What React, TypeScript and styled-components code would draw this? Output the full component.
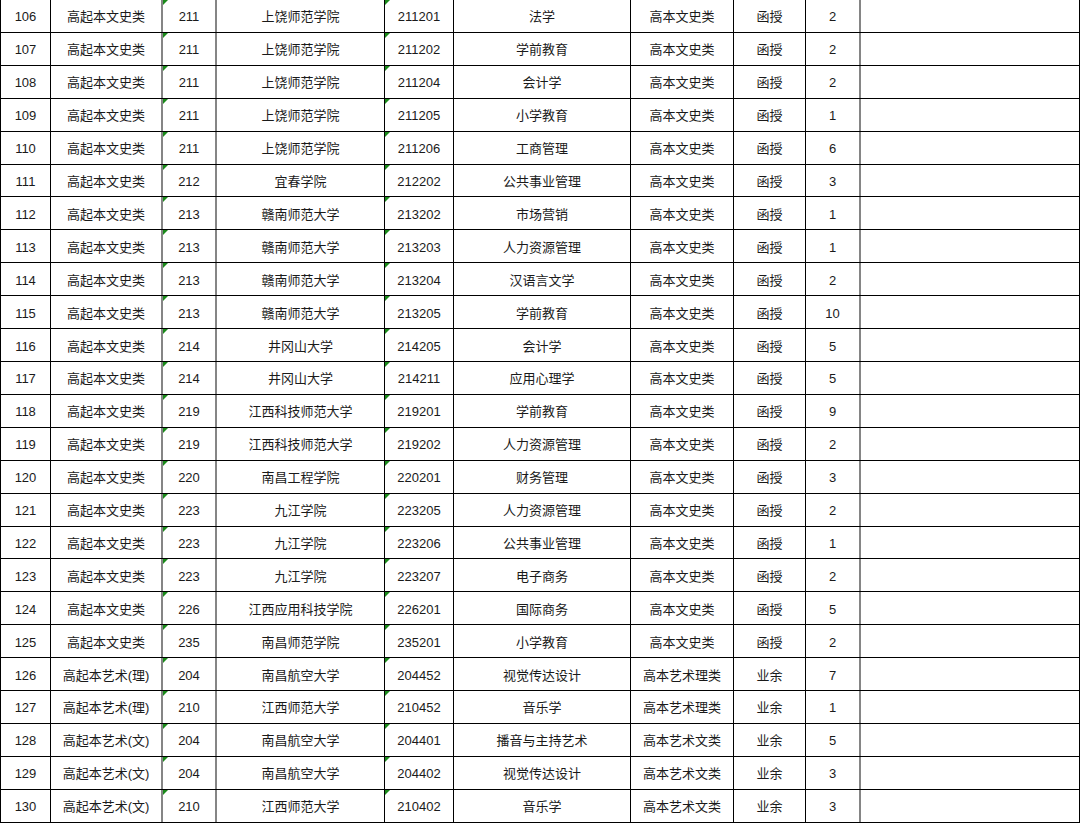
import React from "react";
import styled, { createGlobalStyle } from "styled-components";

const GlobalStyle = createGlobalStyle`
  html, body {
    margin: 0;
    padding: 0;
    background: #ffffff;
  }
  body {
    font-family: "Liberation Sans", Arial, "Noto Sans CJK SC", sans-serif;
    color: #1a1a1a;
  }
`;

// 列宽按截图网格线位置量出来的
const COLS = "50px 112px 54px 168px 69px 177px 103px 72px 55px 219px";

const Table = styled.div`
  width: 1080px;
  border-left: 1px solid #000;
  box-sizing: border-box;
  display: flex;
  flex-direction: column;
`;

const Row = styled.div`
  display: grid;
  grid-template-columns: ${COLS};
  height: 32.92px;
  border-bottom: 1px solid #000;
  box-sizing: border-box;
`;

const Cell = styled.div<{ $thick?: boolean; $flag?: boolean }>`
  position: relative;
  display: flex;
  align-items: center;
  justify-content: center;
  box-sizing: border-box;
  padding-top: 2px;
  border-right: ${(p) => (p.$thick ? "2px solid #858585" : "1px solid #000")};
  font-size: 13px;
  line-height: 1;
  white-space: nowrap;

  ${(p) =>
    p.$flag &&
    `
    &::before {
      content: "";
      position: absolute;
      left: 0;
      top: 0;
      width: 0;
      height: 0;
      border-top: 5px solid #1a8a1a;
      border-right: 5px solid transparent;
    }
  `}
`;

const LastCell = styled(Cell)`
  border-right: 1px solid #000;
`;

type Item = [string, string, string, string, string, string, string, string, string];

const rows: Item[] = [
  ["106", "高起本文史类", "211", "上饶师范学院", "211201", "法学", "高本文史类", "函授", "2"],
  ["107", "高起本文史类", "211", "上饶师范学院", "211202", "学前教育", "高本文史类", "函授", "2"],
  ["108", "高起本文史类", "211", "上饶师范学院", "211204", "会计学", "高本文史类", "函授", "2"],
  ["109", "高起本文史类", "211", "上饶师范学院", "211205", "小学教育", "高本文史类", "函授", "1"],
  ["110", "高起本文史类", "211", "上饶师范学院", "211206", "工商管理", "高本文史类", "函授", "6"],
  ["111", "高起本文史类", "212", "宜春学院", "212202", "公共事业管理", "高本文史类", "函授", "3"],
  ["112", "高起本文史类", "213", "赣南师范大学", "213202", "市场营销", "高本文史类", "函授", "1"],
  ["113", "高起本文史类", "213", "赣南师范大学", "213203", "人力资源管理", "高本文史类", "函授", "1"],
  ["114", "高起本文史类", "213", "赣南师范大学", "213204", "汉语言文学", "高本文史类", "函授", "2"],
  ["115", "高起本文史类", "213", "赣南师范大学", "213205", "学前教育", "高本文史类", "函授", "10"],
  ["116", "高起本文史类", "214", "井冈山大学", "214205", "会计学", "高本文史类", "函授", "5"],
  ["117", "高起本文史类", "214", "井冈山大学", "214211", "应用心理学", "高本文史类", "函授", "5"],
  ["118", "高起本文史类", "219", "江西科技师范大学", "219201", "学前教育", "高本文史类", "函授", "9"],
  ["119", "高起本文史类", "219", "江西科技师范大学", "219202", "人力资源管理", "高本文史类", "函授", "2"],
  ["120", "高起本文史类", "220", "南昌工程学院", "220201", "财务管理", "高本文史类", "函授", "3"],
  ["121", "高起本文史类", "223", "九江学院", "223205", "人力资源管理", "高本文史类", "函授", "2"],
  ["122", "高起本文史类", "223", "九江学院", "223206", "公共事业管理", "高本文史类", "函授", "1"],
  ["123", "高起本文史类", "223", "九江学院", "223207", "电子商务", "高本文史类", "函授", "2"],
  ["124", "高起本文史类", "226", "江西应用科技学院", "226201", "国际商务", "高本文史类", "函授", "5"],
  ["125", "高起本文史类", "235", "南昌师范学院", "235201", "小学教育", "高本文史类", "函授", "2"],
  ["126", "高起本艺术(理)", "204", "南昌航空大学", "204452", "视觉传达设计", "高本艺术理类", "业余", "7"],
  ["127", "高起本艺术(理)", "210", "江西师范大学", "210452", "音乐学", "高本艺术理类", "业余", "1"],
  ["128", "高起本艺术(文)", "204", "南昌航空大学", "204401", "播音与主持艺术", "高本艺术文类", "业余", "5"],
  ["129", "高起本艺术(文)", "204", "南昌航空大学", "204402", "视觉传达设计", "高本艺术文类", "业余", "3"],
  ["130", "高起本艺术(文)", "210", "江西师范大学", "210402", "音乐学", "高本艺术文类", "业余", "3"],
];

const App: React.FC = () => {
  return (
    <>
      <GlobalStyle />
      <Table>
        {rows.map((r) => (
          <Row key={r[0]}>
            <Cell>{r[0]}</Cell>
            <Cell $thick>{r[1]}</Cell>
            <Cell $thick $flag>
              {r[2]}
            </Cell>
            <Cell>{r[3]}</Cell>
            <Cell $flag>{r[4]}</Cell>
            <Cell>{r[5]}</Cell>
            <Cell>{r[6]}</Cell>
            <Cell>{r[7]}</Cell>
            <Cell $thick>{r[8]}</Cell>
            <LastCell />
          </Row>
        ))}
      </Table>
    </>
  );
};

export default App;
